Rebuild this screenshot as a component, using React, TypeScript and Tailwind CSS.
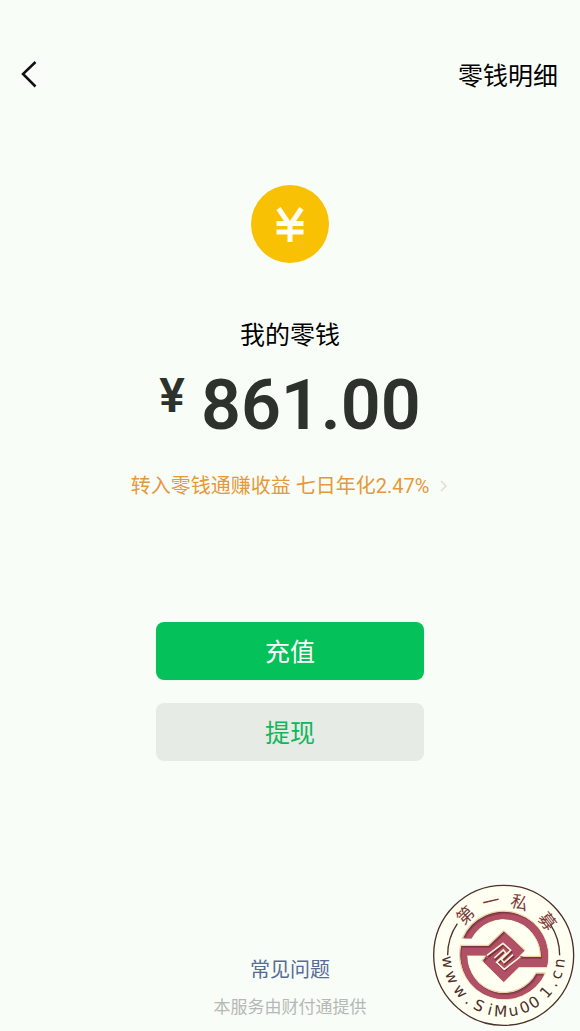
const cjk = "font-['Roboto','Noto_Sans_CJK_SC',sans-serif]"

// ring and the interlocking diamond as one outline
const emblem =
  'M112 190A134 134 0 0 1 365 276H281L236 320 171 256 186 241H126A110 110 0 0 0 333 294H360A134 134 0 0 1 107 211H190L236 167 299 226 281 244H346A110 110 0 0 0 139 190Z'

function BackIcon() {
  return (
    <svg viewBox="0 0 24 30" className="w-6 h-[30px]" fill="none" stroke="#111" strokeWidth="2.500">
      <path d="M18.500 3 6 15l12.500 12.500" />
    </svg>
  )
}

function CoinIcon() {
  return (
    <svg viewBox="0 0 78 78" className="size-[78px]">
      <circle cx="39" cy="39" r="39" fill="#f8c103" />
      <path
        d="M27.500 23.500l11.500 17 11.500-17M25.500 38.500h27M25.500 47h27M39 39v18"
        fill="none"
        stroke="#fffef5"
        strokeWidth="5"
      />
    </svg>
  )
}

function SealLogo() {
  return (
    <svg viewBox="0 0 465 468" className="w-[155px] h-[156px]" role="img" aria-label="第一私募 www.SiMu001.cn">
      <defs>
        <path id="seal-top" d="M89 241a147 147 0 0 1 294 0" />
        <path id="seal-bottom" d="M52 241a184 184 0 0 0 368 0" />
        <clipPath id="seal-clip">
          <path d={emblem} />
        </clipPath>
      </defs>
      <circle cx="236" cy="241" r="210" fill="#fffff2" stroke="#4d3029" strokeWidth="4" />
      <path
        d="M68 241A168 168 0 0 1 97 146M404 241A168 168 0 0 0 376 148"
        fill="none"
        stroke="#4d3029"
        strokeWidth="4"
      />
      <path d={emblem} fill="#74303f" stroke="#ecd3a8" strokeWidth="4" />
      <g clipPath="url(#seal-clip)">
        <path d={emblem} fill="#93404f" transform="translate(3 4)" />
        <path d={emblem} fill="#b25068" transform="translate(5 8)" />
      </g>
      <g fill="none" strokeLinejoin="miter">
        <path
          d="M190 246L236 210 260 231 232 258 240 267 268 243M276 251L240 287 218 267 246 240 238 230 210 255"
          stroke="#74303f"
          strokeWidth="5"
        />
        <path
          d="M186 241L234 205 257 226 229 253 237 263 264 239M286 245L238 283 215 262 243 235 235 225 208 249"
          stroke="#fff3d2"
          strokeWidth="5"
        />
      </g>
      <text
        x="119 197 274 364"
        textAnchor="middle"
        fontSize="52"
        fill="#7c3a36"
        fontFamily="'Noto Sans CJK SC', sans-serif"
      >
        <textPath href="#seal-top">第一私募</textPath>
      </text>
      <text
        x="22 74 128 167 205 244 279 321 360 395 446 482 514 552"
        textAnchor="middle"
        fontSize="46"
        fill="#4d3029"
        fontFamily="'DejaVu Sans', sans-serif"
      >
        <textPath href="#seal-bottom">www.SiMu001.cn</textPath>
      </text>
    </svg>
  )
}

export default function App() {
  return (
    <div className={`${cjk} relative min-h-screen flex flex-col bg-[#f8fdf8] text-black`}>
      <header className="flex items-end justify-between pl-[17px] pr-[22px] pt-[59px]">
        <button type="button" aria-label="返回" className="pb-[6px]">
          <BackIcon />
        </button>
        <a href="#detail" className="text-[25px] leading-9">零钱明细</a>
      </header>

      <main className="flex-1 flex flex-col items-center pt-[90px]">
        <CoinIcon />
        <h1 className="mt-[55px] text-[25px] leading-9">我的零钱</h1>
        <p className="mt-[14px] flex items-start gap-4 font-semibold text-[#2d322d]">
          <span className="text-5xl leading-[56px]">¥</span>
          <span className="text-[70px] leading-[74px]">861.00</span>
        </p>
        <a href="#invest" className="mt-7 flex items-center gap-2 text-xl leading-8 text-[#e5993a]">
          转入零钱通赚收益 七日年化2.47%
          <svg viewBox="0 0 12 12" className="size-3" fill="none" stroke="#e2ddd0" strokeWidth="1.500">
            <path d="M4 1l5 5-5 5" />
          </svg>
        </a>
        <div className="mt-30 flex flex-col gap-[23px] w-[268px] text-[25px]">
          <button type="button" className="h-[58px] pt-1 rounded-lg bg-[#05c159] text-white">充值</button>
          <button type="button" className="h-[58px] pt-1 rounded-lg bg-[#e7ebe5] text-[#10b75a]">提现</button>
        </div>
      </main>

      <footer className="flex flex-col items-center pb-2">
        <a href="#faq" className="text-xl leading-8 text-[#576b95]">常见问题</a>
        <p className="mt-[5px] text-[17px] leading-8 text-[#b5b9b5]">本服务由财付通提供</p>
      </footer>

      <div className="absolute right-0 bottom-0">
        <SealLogo />
      </div>
    </div>
  )
}
